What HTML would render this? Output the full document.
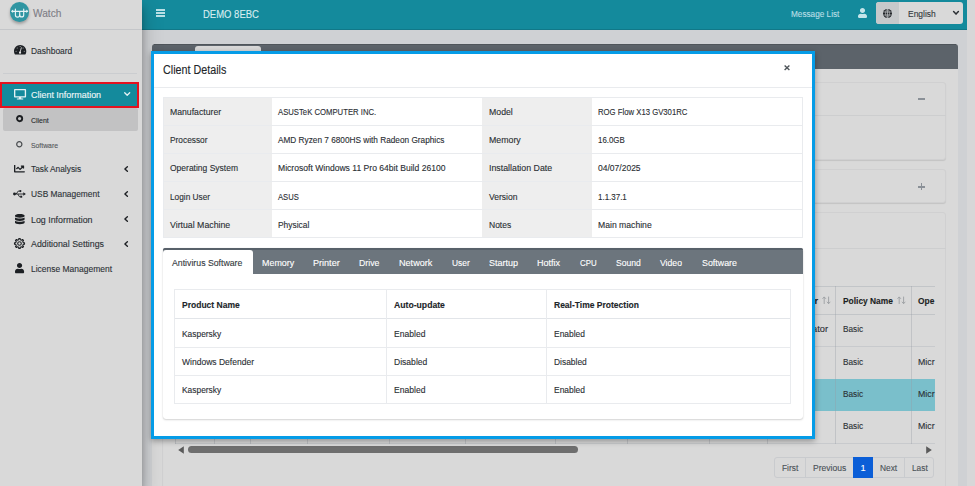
<!DOCTYPE html>
<html><head><meta charset="utf-8"><title>Watch</title>
<style>
html,body{margin:0;padding:0;}
body{width:975px;height:486px;overflow:hidden;position:relative;background:#cfd1d4;font-family:"Liberation Sans",sans-serif;}
.a{position:absolute;box-sizing:border-box;}
.t{position:absolute;white-space:nowrap;transform-origin:0 50%;font-family:"Liberation Sans",sans-serif;-webkit-text-stroke:0.12px;}
svg{position:absolute;overflow:visible;}
</style></head><body>

<!-- top navbar -->
<div class="a" style="left:142px;top:0;width:825px;height:29.5px;background:#148a9c;"></div>
<div class="a" style="left:142px;top:28.7px;width:825px;height:0.8px;background:#117888;"></div>
<!-- right scrollbar strip -->
<div class="a" style="left:967px;top:0;width:8px;height:486px;background:#d7d7d8;"></div>

<!-- main card -->
<div class="a" style="left:151.5px;top:43.5px;width:806.5px;height:460px;background:#d9d9d9;border-radius:3px 3px 0 0;"></div>
<div class="a" style="left:151.5px;top:43.5px;width:806.5px;height:25.5px;background:#5c636a;border-radius:3px 3px 0 0;"></div>
<div class="a" style="left:153.5px;top:43.5px;width:802.5px;height:1px;background:#4f555b;"></div>
<div class="a" style="left:194.8px;top:46.2px;width:66px;height:23px;background:#d9d9d9;border-radius:3px 3px 0 0;"></div>

<!-- inner card 1 -->
<div class="a" style="left:162.3px;top:82px;width:784px;height:78px;background:#d9d9d9;border:1px solid #d0d0d1;border-radius:3px;box-shadow:0 1px 1px rgba(0,0,0,.10);"></div>
<div class="a" style="left:162.3px;top:114.6px;width:784px;height:1px;background:#cdcecf;"></div>
<div class="a" style="left:917.8px;top:97.9px;width:7.6px;height:1.7px;background:#8a9097;"></div>
<!-- inner card 2 -->
<div class="a" style="left:162.3px;top:169.3px;width:784px;height:33.5px;background:#d9d9d9;border:1px solid #d0d0d1;border-radius:3px;box-shadow:0 1px 1px rgba(0,0,0,.10);"></div>
<div class="a" style="left:917.8px;top:185.9px;width:7.6px;height:1.7px;background:#8a9097;"></div>
<div class="a" style="left:920.8px;top:182.9px;width:1.7px;height:7.6px;background:#8a9097;"></div>
<!-- inner card 3 -->
<div class="a" style="left:162.3px;top:212px;width:784px;height:300px;background:#d9d9d9;border:1px solid #d0d0d1;border-radius:3px;"></div>
<div class="a" style="left:162.3px;top:247.6px;width:784px;height:1px;background:#cdcecf;"></div>

<!-- background table -->
<div class="a" style="left:174px;top:285.5px;width:760.8px;height:158.4px;overflow:hidden;">
  <div class="a" style="left:1px;top:0;width:761px;height:1px;background:#c2c5c8;"></div>
  <div class="a" style="left:1px;top:28.5px;width:761px;height:1.2px;background:#c2c5c8;"></div>
  <div class="a" style="left:1px;top:60.8px;width:761px;height:1px;background:#c8cacd;"></div>
  <div class="a" style="left:1px;top:93px;width:761px;height:1px;background:#c8cacd;"></div>
  <div class="a" style="left:1px;top:93.6px;width:761px;height:32.1px;background:#7abfcb;"></div>
  <div class="a" style="left:1px;top:157.4px;width:761px;height:1px;background:#c8cacd;"></div>
  <div class="a" style="left:0.5px;top:0;width:1px;height:158px;background:rgba(150,156,164,.36);"></div>
  <div class="a" style="left:39.8px;top:0;width:1px;height:158px;background:rgba(150,156,164,.36);"></div>
  <div class="a" style="left:75.5px;top:0;width:1px;height:158px;background:rgba(150,156,164,.36);"></div>
  <div class="a" style="left:132.8px;top:0;width:1px;height:158px;background:rgba(150,156,164,.36);"></div>
  <div class="a" style="left:214.8px;top:0;width:1px;height:158px;background:rgba(150,156,164,.36);"></div>
  <div class="a" style="left:290.5px;top:0;width:1px;height:158px;background:rgba(150,156,164,.36);"></div>
  <div class="a" style="left:380.5px;top:0;width:1px;height:158px;background:rgba(150,156,164,.36);"></div>
  <div class="a" style="left:452.8px;top:0;width:1px;height:158px;background:rgba(150,156,164,.36);"></div>
  <div class="a" style="left:534.8px;top:0;width:1px;height:158px;background:rgba(150,156,164,.36);"></div>
  <div class="a" style="left:593.2px;top:0;width:1px;height:158px;background:rgba(150,156,164,.36);"></div>
  <div class="a" style="left:661.0px;top:0;width:1px;height:158px;background:rgba(150,156,164,.36);"></div>
  <div class="a" style="left:736.9px;top:0;width:1px;height:158px;background:rgba(150,156,164,.36);"></div>
</div>
<!-- h scrollbar -->
<div class="a" style="left:188.3px;top:445.8px;width:390px;height:7.4px;background:#6e6e6e;border-radius:4px;"></div>
<svg style="left:177.8px;top:445.6px" width="6" height="8" viewBox="0 0 6 8"><path d="M5.8 0.2 L0.2 4 L5.8 7.8Z" fill="#5a5a5a"/></svg>
<svg style="left:926.2px;top:445.6px" width="6" height="8" viewBox="0 0 6 8"><path d="M0.2 0.2 L5.8 4 L0.2 7.8Z" fill="#5a5a5a"/></svg>

<!-- pagination -->
<div class="a" style="left:774.2px;top:456.8px;width:160.3px;height:21.6px;background:#d9d9d9;border:1px solid #c9cbce;border-radius:3px;"></div>
<div class="a" style="left:805.1px;top:456.8px;width:1px;height:21.6px;background:#c9cbce;"></div>
<div class="a" style="left:853.2px;top:456.8px;width:19.4px;height:21.6px;background:#0b5ed7;"></div>
<div class="a" style="left:903.9px;top:456.8px;width:1px;height:21.6px;background:#c9cbce;"></div>

<!-- sidebar -->
<div class="a" style="left:0;top:0;width:142.2px;height:486px;background:#d9d9d9;box-shadow:0 9px 19px rgba(0,0,0,.25),0 7px 7px rgba(0,0,0,.22);"></div>
<div class="a" style="left:0;top:28.9px;width:142.2px;height:1px;background:#c4c6c9;"></div>
<div class="a" style="left:2.7px;top:73px;width:134.5px;height:1px;background:#cbcdd0;"></div>
<!-- logo -->
<div class="a" style="left:9.6px;top:2.1px;width:19.8px;height:19.8px;border-radius:50%;background:#2f95a2;box-shadow:0 2px 3px rgba(0,0,0,.28);"></div>
<svg style="left:0;top:0" width="40" height="26" viewBox="0 0 40 26"><g fill="none" stroke="#e6f3f5" stroke-width="1.15" stroke-linecap="round"><path d="M12.2 11.3 H27.2"/><path d="M15.4 9.1 V14.9 a2.15 2.15 0 0 0 4.3 0 V11.5"/><path d="M19.7 14.9 a2 2 0 0 0 4 0 V9.1"/></g><path d="M13.1 9.5 L11 11.3 L13.1 13.1Z M26.3 9.5 L28.4 11.3 L26.3 13.1Z" fill="#e6f3f5"/></svg>
<!-- active item -->
<div class="a" style="left:0;top:82.1px;width:139.3px;height:25.8px;background:#148a9c;border:2.5px solid #e5121f;"></div>
<div class="a" style="left:2.9px;top:108.3px;width:134.9px;height:22.3px;background:#c2c2c3;border-radius:2px;"></div>

<!-- sidebar icons -->
<svg style="left:13.8px;top:45.2px" width="12.3" height="9.6" viewBox="0 32 576 448" preserveAspectRatio="none"><path fill="#1d2024" d="M288 32C128.940 32 0 160.940 0 320c0 52.800 14.250 102.260 39.060 144.800 5.610 9.620 16.300 15.200 27.440 15.200h443c11.140 0 21.830-5.580 27.440-15.200C561.750 422.260 576 372.800 576 320c0-159.060-128.940-288-288-288z"/><circle cx="288" cy="104" r="24" fill="#b9bbbd"/><circle cx="150" cy="176" r="24" fill="#b9bbbd"/><circle cx="96" cy="320" r="24" fill="#b9bbbd"/><circle cx="480" cy="320" r="24" fill="#b9bbbd"/><circle cx="426" cy="176" r="24" fill="#b9bbbd"/><path d="M282 380 L344 160" stroke="#e3e3e3" stroke-width="40" stroke-linecap="round"/><circle cx="282" cy="392" r="52" fill="#e3e3e3"/></svg>
<svg style="left:14.1px;top:88.8px" width="12.1" height="10.4" viewBox="0 0 576 512" preserveAspectRatio="none"><path fill="#e4f2f4" d="M528 0H48C21.500 0 0 21.500 0 48v320c0 26.500 21.500 48 48 48h192l-16 48h-72c-13.300 0-24 10.700-24 24s10.700 24 24 24h272c13.300 0 24-10.700 24-24s-10.700-24-24-24h-72l-16-48h192c26.500 0 48-21.500 48-48V48c0-26.500-21.500-48-48-48zm-16 352H64V64h448v288z"/></svg>
<svg style="left:123.7px;top:91.8px" width="6.4" height="4.2" viewBox="0 0 6.4 4.2"><path d="M0.7 0.7 L3.2 3.3 L5.7 0.7" stroke="#e4f2f4" stroke-width="1.3" fill="none" stroke-linecap="round" stroke-linejoin="round"/></svg>
<svg style="left:16.1px;top:115.3px" width="7.2" height="7.2" viewBox="0 0 7.2 7.2"><circle cx="3.6" cy="3.6" r="2.6" fill="none" stroke="#1d1f22" stroke-width="1.9"/></svg>
<svg style="left:16.4px;top:140.6px" width="6.6" height="6.6" viewBox="0 0 6.6 6.6"><circle cx="3.3" cy="3.3" r="2.6" fill="none" stroke="#4a4d50" stroke-width="1.2"/></svg>
<svg style="left:14.4px;top:164.6px" width="10.8" height="7.4" viewBox="0 64 512 384" preserveAspectRatio="none"><path fill="#1d2024" d="M496 384H64V80c0-8.840-7.160-16-16-16H16C7.160 64 0 71.160 0 80v336c0 17.670 14.330 32 32 32h464c8.840 0 16-7.160 16-16v-32c0-8.840-7.160-16-16-16zM464 96H345.940c-21.380 0-32.090 25.850-16.970 40.970l32.400 32.400L288 242.750l-73.370-73.370c-12.500-12.500-32.760-12.500-45.250 0l-68.690 68.690c-6.250 6.250-6.250 16.380 0 22.630l22.620 22.620c6.250 6.250 16.380 6.250 22.630 0L192 237.250l73.370 73.370c12.500 12.500 32.760 12.500 45.250 0l96-96 32.400 32.400c15.120 15.120 40.970 4.410 40.970-16.970V112c.01-8.840-7.150-16-15.990-16z"/></svg>
<svg style="left:13.3px;top:189.6px" width="13" height="8" viewBox="0 0 13 8"><g fill="#1d2024" stroke="none"><circle cx="1.5" cy="4" r="1.45"/><path d="M10.3 2.2 L12.9 4 L10.3 5.8Z"/><circle cx="7.4" cy="1.1" r="1.05"/><rect x="7.2" y="5.7" width="2" height="2"/></g><g fill="none" stroke="#1d2024" stroke-width="0.9"><path d="M1.5 4 H11"/><path d="M3.2 4 L5.2 1.1 H7.2"/><path d="M4.8 4 L6.4 6.7 H7.4"/></g></svg>
<svg style="left:15.1px;top:213.6px" width="9.6" height="10.2" viewBox="0 0 448 512" preserveAspectRatio="none"><path fill="#1d2024" d="M448 73.143v45.714C448 159.143 347.667 192 224 192S0 159.143 0 118.857V73.143C0 32.857 100.333 0 224 0s224 32.857 224 73.143zM448 176v102.857C448 319.143 347.667 352 224 352S0 319.143 0 278.857V176c48.125 33.143 136.208 48.572 224 48.572S399.874 209.143 448 176zm0 160v102.857C448 479.143 347.667 512 224 512S0 479.143 0 438.857V336c48.125 33.143 136.208 48.572 224 48.572S399.874 369.143 448 336z"/></svg>
<svg style="left:14.35px;top:237.9px" width="11" height="11" viewBox="0.2 0.2 11.6 11.6"><path d="M10.01 5.17 L11.25 5.27 L11.25 6.73 L10.01 6.83 L9.43 8.25 L10.23 9.19 L9.19 10.23 L8.25 9.43 L6.83 10.01 L6.73 11.25 L5.27 11.25 L5.17 10.01 L3.75 9.43 L2.81 10.23 L1.77 9.19 L2.57 8.25 L1.99 6.83 L0.75 6.73 L0.75 5.27 L1.99 5.17 L2.57 3.75 L1.77 2.81 L2.81 1.77 L3.75 2.57 L5.17 1.99 L5.27 0.75 L6.73 0.75 L6.83 1.99 L8.25 2.57 L9.19 1.77 L10.23 2.81 L9.43 3.75Z" fill="none" stroke="#1d2024" stroke-width="1.2" stroke-linejoin="round"/><circle cx="6" cy="6" r="1.9" fill="none" stroke="#1d2024" stroke-width="1.15"/></svg>
<svg style="left:15.3px;top:263.2px" width="9.1" height="10.2" viewBox="0 0 448 512" preserveAspectRatio="none"><path fill="#1d2024" d="M224 256c70.700 0 128-57.300 128-128S294.700 0 224 0 96 57.300 96 128s57.300 128 128 128zm89.600 32h-16.700c-22.200 10.200-46.900 16-72.900 16s-50.600-5.800-72.900-16h-16.700C60.200 288 0 348.200 0 422.400V464c0 26.500 21.500 48 48 48h352c26.500 0 48-21.500 48-48v-41.600c0-74.200-60.200-134.400-134.400-134.400z"/></svg>
<!-- chevrons left -->
<svg style="left:124.2px;top:165.9px" width="4.2" height="6" viewBox="0 0 4.2 6"><path d="M3.4 0.7 L0.9 3 L3.4 5.3" stroke="#1d2024" stroke-width="1.4" fill="none" stroke-linejoin="round" stroke-linecap="round"/></svg>
<svg style="left:124.2px;top:190.9px" width="4.2" height="6" viewBox="0 0 4.2 6"><path d="M3.4 0.7 L0.9 3 L3.4 5.3" stroke="#1d2024" stroke-width="1.4" fill="none" stroke-linejoin="round" stroke-linecap="round"/></svg>
<svg style="left:124.2px;top:215.6px" width="4.2" height="6" viewBox="0 0 4.2 6"><path d="M3.4 0.7 L0.9 3 L3.4 5.3" stroke="#1d2024" stroke-width="1.4" fill="none" stroke-linejoin="round" stroke-linecap="round"/></svg>
<svg style="left:124.2px;top:240.8px" width="4.2" height="6" viewBox="0 0 4.2 6"><path d="M3.4 0.7 L0.9 3 L3.4 5.3" stroke="#1d2024" stroke-width="1.4" fill="none" stroke-linejoin="round" stroke-linecap="round"/></svg>
<!-- navbar icons -->
<div class="a" style="left:156px;top:9.3px;width:8.9px;height:1.3px;background:#b9dfe5;"></div>
<div class="a" style="left:156px;top:12.3px;width:8.9px;height:1.3px;background:#b9dfe5;"></div>
<div class="a" style="left:156px;top:15.3px;width:8.9px;height:1.3px;background:#b9dfe5;"></div>
<svg style="left:858px;top:8px" width="9" height="10" viewBox="0 0 448 512" preserveAspectRatio="none"><path fill="#c4e5ea" d="M224 256c70.700 0 128-57.300 128-128S294.700 0 224 0 96 57.300 96 128s57.300 128 128 128zm89.600 32h-16.700c-22.200 10.200-46.900 16-72.900 16s-50.600-5.800-72.900-16h-16.700C60.200 288 0 348.200 0 422.400V464c0 26.500 21.500 48 48 48h352c26.500 0 48-21.500 48-48v-41.600c0-74.200-60.200-134.400-134.400-134.400z"/></svg>
<!-- sort arrows -->
<svg style="left:896.5px;top:296.3px" width="9" height="8.6" viewBox="0 0 9 8.6"><path d="M2.2 8 V1 M0.5 2.8 L2.2 0.9 L3.9 2.8 M6.6 0.6 V7.6 M4.9 5.8 L6.6 7.7 L8.3 5.8" stroke="#9b9ea2" stroke-width="0.9" fill="none"/></svg>
<svg style="left:821.5px;top:296.3px" width="9" height="8.6" viewBox="0 0 9 8.6"><path d="M2.2 8 V1 M0.5 2.8 L2.2 0.9 L3.9 2.8 M6.6 0.6 V7.6 M4.9 5.8 L6.6 7.7 L8.3 5.8" stroke="#9b9ea2" stroke-width="0.9" fill="none"/></svg>

<span class="t" style="left:33.40px;top:6px;font-size:10.6px;line-height:14px;color:#7d7d86;transform:scaleX(0.9581);">Watch</span>
<span class="t" style="left:30.80px;top:45px;font-size:9.1px;line-height:12px;color:#2c3136;transform:scaleX(0.9281);">Dashboard</span>
<span class="t" style="left:30.70px;top:89px;font-size:9.2px;line-height:12px;color:#eef7f8;transform:scaleX(0.9734);">Client Information</span>
<span class="t" style="left:30.70px;top:115px;font-size:7.6px;line-height:11px;color:#2a2c30;transform:scaleX(0.9165);">Client</span>
<span class="t" style="left:30.70px;top:140px;font-size:7.6px;line-height:11px;color:#55585c;transform:scaleX(0.9009);">Software</span>
<span class="t" style="left:30.70px;top:163px;font-size:9.2px;line-height:12px;color:#2c3136;transform:scaleX(0.9083);">Task Analysis</span>
<span class="t" style="left:30.70px;top:188px;font-size:9.2px;line-height:12px;color:#2c3136;transform:scaleX(0.9124);">USB Management</span>
<span class="t" style="left:30.70px;top:214px;font-size:9.2px;line-height:12px;color:#2c3136;transform:scaleX(0.9633);">Log Information</span>
<span class="t" style="left:30.70px;top:238px;font-size:9.2px;line-height:12px;color:#2c3136;transform:scaleX(0.9591);">Additional Settings</span>
<span class="t" style="left:30.70px;top:263px;font-size:9.2px;line-height:12px;color:#2c3136;transform:scaleX(0.9219);">License Management</span>
<span class="t" style="left:203.00px;top:7px;font-size:10.7px;line-height:14px;color:#d9edf0;transform:scaleX(0.8880);">DEMO 8EBC</span>
<span class="t" style="left:791.20px;top:8px;font-size:9.2px;line-height:12px;color:#b9dfe5;transform:scaleX(0.8940);">Message List</span>
<span class="t" style="left:842.80px;top:295px;font-size:9.2px;line-height:12px;color:#1c1f23;font-weight:700;transform:scaleX(0.9132);">Policy Name</span>
<span class="t" style="left:917.70px;top:295px;font-size:9.2px;line-height:12px;color:#1c1f23;font-weight:700;transform:scaleX(0.9119);">Ope</span>
<span class="t" style="left:812.20px;top:323px;font-size:9.2px;line-height:12px;color:#2c3035;transform:scaleX(1.0099);">ator</span>
<span class="t" style="left:814.60px;top:295px;font-size:9.2px;line-height:12px;color:#1c1f23;font-weight:700;">r</span>
<span class="t" style="left:842.80px;top:323px;font-size:9.2px;line-height:12px;color:#2c3035;transform:scaleX(0.8946);">Basic</span>
<span class="t" style="left:842.80px;top:356px;font-size:9.2px;line-height:12px;color:#2c3035;transform:scaleX(0.8946);">Basic</span>
<span class="t" style="left:842.80px;top:388px;font-size:9.2px;line-height:12px;color:#2c3035;transform:scaleX(0.8946);">Basic</span>
<span class="t" style="left:842.80px;top:420px;font-size:9.2px;line-height:12px;color:#2c3035;transform:scaleX(0.8946);">Basic</span>
<span class="t" style="left:917.70px;top:356px;font-size:9.2px;line-height:12px;color:#2c3035;transform:scaleX(0.9563);">Micr</span>
<span class="t" style="left:917.70px;top:388px;font-size:9.2px;line-height:12px;color:#2c3035;transform:scaleX(0.9563);">Micr</span>
<span class="t" style="left:917.70px;top:420px;font-size:9.2px;line-height:12px;color:#2c3035;transform:scaleX(0.9563);">Micr</span>
<span class="t" style="left:781.80px;top:462px;font-size:9.2px;line-height:12px;color:#4a5157;transform:scaleX(0.9071);">First</span>
<span class="t" style="left:812.80px;top:462px;font-size:9.2px;line-height:12px;color:#4a5157;transform:scaleX(0.9287);">Previous</span>
<span class="t" style="left:860.54px;top:462px;font-size:9.2px;line-height:12px;color:#ffffff;">1</span>
<span class="t" style="left:879.60px;top:462px;font-size:9.2px;line-height:12px;color:#4a5157;transform:scaleX(0.9098);">Next</span>
<span class="t" style="left:911.60px;top:462px;font-size:9.2px;line-height:12px;color:#4a5157;transform:scaleX(0.9036);">Last</span>

<!-- navbar controls -->
<div class="a" style="left:876px;top:2.4px;width:86.8px;height:21.2px;background:#d9d9d9;border-radius:3px;"></div>
<div class="a" style="left:876px;top:2.4px;width:23.4px;height:21.2px;background:#c6c9cb;border-radius:3px 0 0 3px;"></div>

<svg style="left:883.1px;top:8.9px" width="9" height="9" viewBox="0 0 9 9"><circle cx="4.5" cy="4.5" r="4.5" fill="#1f2327"/><g fill="none" stroke="#c6c9cb" stroke-width="0.7"><ellipse cx="4.5" cy="4.5" rx="1.9" ry="4.2"/><path d="M0.3 3 H8.7 M0.3 6 H8.7 M4.5 0.2 V8.8"/></g></svg>
<svg style="left:953px;top:11.4px" width="6" height="4" viewBox="0 0 6 4"><path d="M0.6 0.6 L3 3.1 L5.4 0.6" stroke="#2a2e33" stroke-width="1.5" fill="none" stroke-linecap="round" stroke-linejoin="round"/></svg>

<!-- modal -->
<div class="a" style="left:151px;top:50.5px;width:664px;height:388.8px;background:#fff;border:3px solid #059ce7;box-shadow:0 2px 6px rgba(0,0,0,.35);"></div>
<div class="a" style="left:154px;top:86.7px;width:658px;height:1px;background:#e9ebee;"></div>

<!-- details table -->
<div class="a" style="left:163.2px;top:97px;width:108.8px;height:140.6px;background:#eeeeee;"></div>
<div class="a" style="left:482.3px;top:97px;width:109.3px;height:140.6px;background:#eeeeee;"></div>
<div class="a" style="left:162.7px;top:96.7px;width:640.2px;height:1px;background:#e9ebee;"></div>
<div class="a" style="left:162.7px;top:124.9px;width:640.2px;height:1px;background:#e9ebee;"></div>
<div class="a" style="left:162.7px;top:152.9px;width:640.2px;height:1px;background:#e9ebee;"></div>
<div class="a" style="left:162.7px;top:181.0px;width:640.2px;height:1px;background:#e9ebee;"></div>
<div class="a" style="left:162.7px;top:209.1px;width:640.2px;height:1px;background:#e9ebee;"></div>
<div class="a" style="left:162.7px;top:237.3px;width:640.2px;height:1px;background:#e9ebee;"></div>
<div class="a" style="left:162.7px;top:96.7px;width:1px;height:141.6px;background:#e9ebee;"></div>
<div class="a" style="left:801.9px;top:96.7px;width:1px;height:141.6px;background:#e9ebee;"></div>

<!-- tab card -->
<div class="a" style="left:163px;top:247.8px;width:639.5px;height:171.2px;background:#fff;border-radius:3px;box-shadow:0 0 1px rgba(0,0,0,.14),0 1px 2px rgba(0,0,0,.17);"></div>
<div class="a" style="left:163px;top:247.8px;width:639.5px;height:26px;background:#6c757d;border-radius:3px 3px 0 0;"></div>
<div class="a" style="left:163px;top:247.8px;width:639.5px;height:2.4px;background:#58616a;border-radius:3px 3px 0 0;"></div>
<div class="a" style="left:163px;top:250.2px;width:89.9px;height:23.8px;background:#fff;border-radius:3px 3px 0 0;"></div>

<!-- AV table -->
<div class="a" style="left:174.1px;top:288.9px;width:616.6px;height:1px;background:#e9ebee;"></div>
<div class="a" style="left:174.1px;top:317.5px;width:616.6px;height:1.6px;background:#e2e5e9;"></div>
<div class="a" style="left:174.1px;top:346.8px;width:616.6px;height:1px;background:#e9ebee;"></div>
<div class="a" style="left:174.1px;top:374.7px;width:616.6px;height:1px;background:#e9ebee;"></div>
<div class="a" style="left:174.1px;top:402.9px;width:616.6px;height:1px;background:#e9ebee;"></div>
<div class="a" style="left:174.1px;top:288.9px;width:1px;height:115px;background:#e9ebee;"></div>
<div class="a" style="left:386.3px;top:288.9px;width:1px;height:115px;background:#e9ebee;"></div>
<div class="a" style="left:546.3px;top:288.9px;width:1px;height:115px;background:#e9ebee;"></div>
<div class="a" style="left:789.7px;top:288.9px;width:1px;height:115px;background:#e9ebee;"></div>

<svg style="left:784.1px;top:65.3px" width="6" height="5.6" viewBox="0 0 6 5.6"><path d="M0.6 0.5 L5.4 5.1 M5.4 0.5 L0.6 5.1" stroke="#4d5358" stroke-width="1.35" fill="none"/></svg>

<span class="t" style="left:908.20px;top:8px;font-size:9.2px;line-height:12px;color:#33383d;transform:scaleX(0.9223);">English</span>
<span class="t" style="left:162.60px;top:62px;font-size:12.3px;line-height:16px;color:#212529;transform:scaleX(0.8737);">Client Details</span>
<span class="t" style="left:170.10px;top:106px;font-size:9.1px;line-height:12px;color:#2a2e33;transform:scaleX(0.9537);">Manufacturer</span>
<span class="t" style="left:278.30px;top:106px;font-size:9.1px;line-height:12px;color:#2a2e33;transform:scaleX(0.8486);">ASUSTeK COMPUTER INC.</span>
<span class="t" style="left:489.30px;top:106px;font-size:9.1px;line-height:12px;color:#2a2e33;transform:scaleX(0.9604);">Model</span>
<span class="t" style="left:598.40px;top:106px;font-size:9.1px;line-height:12px;color:#2a2e33;transform:scaleX(0.8504);">ROG Flow X13 GV301RC</span>
<span class="t" style="left:170.10px;top:134px;font-size:9.1px;line-height:12px;color:#2a2e33;transform:scaleX(0.9160);">Processor</span>
<span class="t" style="left:278.30px;top:134px;font-size:9.1px;line-height:12px;color:#2a2e33;transform:scaleX(0.9069);">AMD Ryzen 7 6800HS with Radeon Graphics</span>
<span class="t" style="left:489.30px;top:134px;font-size:9.1px;line-height:12px;color:#2a2e33;transform:scaleX(0.9652);">Memory</span>
<span class="t" style="left:598.40px;top:134px;font-size:9.1px;line-height:12px;color:#2a2e33;transform:scaleX(0.8657);">16.0GB</span>
<span class="t" style="left:170.10px;top:162px;font-size:9.1px;line-height:12px;color:#2a2e33;transform:scaleX(0.9343);">Operating System</span>
<span class="t" style="left:278.30px;top:162px;font-size:9.1px;line-height:12px;color:#2a2e33;transform:scaleX(0.9423);">Microsoft Windows 11 Pro 64bit Build 26100</span>
<span class="t" style="left:489.30px;top:162px;font-size:9.1px;line-height:12px;color:#2a2e33;transform:scaleX(0.9690);">Installation Date</span>
<span class="t" style="left:598.40px;top:162px;font-size:9.1px;line-height:12px;color:#2a2e33;transform:scaleX(0.9359);">04/07/2025</span>
<span class="t" style="left:170.10px;top:191px;font-size:9.1px;line-height:12px;color:#2a2e33;transform:scaleX(0.9094);">Login User</span>
<span class="t" style="left:278.30px;top:191px;font-size:9.1px;line-height:12px;color:#2a2e33;transform:scaleX(0.8399);">ASUS</span>
<span class="t" style="left:489.30px;top:191px;font-size:9.1px;line-height:12px;color:#2a2e33;transform:scaleX(0.9392);">Version</span>
<span class="t" style="left:598.40px;top:191px;font-size:9.1px;line-height:12px;color:#2a2e33;transform:scaleX(0.8760);">1.1.37.1</span>
<span class="t" style="left:170.10px;top:219px;font-size:9.1px;line-height:12px;color:#2a2e33;transform:scaleX(0.9630);">Virtual Machine</span>
<span class="t" style="left:278.30px;top:219px;font-size:9.1px;line-height:12px;color:#2a2e33;transform:scaleX(0.9240);">Physical</span>
<span class="t" style="left:489.30px;top:219px;font-size:9.1px;line-height:12px;color:#2a2e33;transform:scaleX(0.9341);">Notes</span>
<span class="t" style="left:598.40px;top:219px;font-size:9.1px;line-height:12px;color:#2a2e33;transform:scaleX(0.9483);">Main machine</span>
<span class="t" style="left:171.80px;top:257px;font-size:9.2px;line-height:12px;color:#343a40;transform:scaleX(0.9507);">Antivirus Software</span>
<span class="t" style="left:261.80px;top:257px;font-size:9.2px;line-height:12px;color:#fff;transform:scaleX(0.9702);">Memory</span>
<span class="t" style="left:313.30px;top:257px;font-size:9.2px;line-height:12px;color:#fff;transform:scaleX(0.9866);">Printer</span>
<span class="t" style="left:359.20px;top:257px;font-size:9.2px;line-height:12px;color:#fff;transform:scaleX(0.9509);">Drive</span>
<span class="t" style="left:398.90px;top:257px;font-size:9.2px;line-height:12px;color:#fff;transform:scaleX(0.9880);">Network</span>
<span class="t" style="left:451.50px;top:257px;font-size:9.2px;line-height:12px;color:#fff;transform:scaleX(0.9121);">User</span>
<span class="t" style="left:488.60px;top:257px;font-size:9.2px;line-height:12px;color:#fff;transform:scaleX(0.9789);">Startup</span>
<span class="t" style="left:537.30px;top:257px;font-size:9.2px;line-height:12px;color:#fff;transform:scaleX(0.9830);">Hotfix</span>
<span class="t" style="left:579.60px;top:257px;font-size:9.2px;line-height:12px;color:#fff;transform:scaleX(0.8554);">CPU</span>
<span class="t" style="left:615.90px;top:257px;font-size:9.2px;line-height:12px;color:#fff;transform:scaleX(0.9369);">Sound</span>
<span class="t" style="left:660.20px;top:257px;font-size:9.2px;line-height:12px;color:#fff;transform:scaleX(0.9424);">Video</span>
<span class="t" style="left:701.60px;top:257px;font-size:9.2px;line-height:12px;color:#fff;transform:scaleX(0.9651);">Software</span>
<span class="t" style="left:181.60px;top:299px;font-size:9.2px;line-height:12px;color:#212529;font-weight:700;transform:scaleX(0.9262);">Product Name</span>
<span class="t" style="left:393.70px;top:299px;font-size:9.2px;line-height:12px;color:#212529;font-weight:700;transform:scaleX(0.9410);">Auto-update</span>
<span class="t" style="left:553.60px;top:299px;font-size:9.2px;line-height:12px;color:#212529;font-weight:700;transform:scaleX(0.9255);">Real-Time Protection</span>
<span class="t" style="left:181.60px;top:328px;font-size:9.1px;line-height:12px;color:#2a2e33;transform:scaleX(0.9230);">Kaspersky</span>
<span class="t" style="left:393.90px;top:328px;font-size:9.1px;line-height:12px;color:#2a2e33;transform:scaleX(0.9408);">Enabled</span>
<span class="t" style="left:553.70px;top:328px;font-size:9.1px;line-height:12px;color:#2a2e33;transform:scaleX(0.9288);">Enabled</span>
<span class="t" style="left:181.60px;top:356px;font-size:9.1px;line-height:12px;color:#2a2e33;transform:scaleX(0.9372);">Windows Defender</span>
<span class="t" style="left:393.90px;top:356px;font-size:9.1px;line-height:12px;color:#2a2e33;transform:scaleX(0.9409);">Disabled</span>
<span class="t" style="left:553.70px;top:356px;font-size:9.1px;line-height:12px;color:#2a2e33;transform:scaleX(0.9268);">Disabled</span>
<span class="t" style="left:181.60px;top:384px;font-size:9.1px;line-height:12px;color:#2a2e33;transform:scaleX(0.9230);">Kaspersky</span>
<span class="t" style="left:393.90px;top:384px;font-size:9.1px;line-height:12px;color:#2a2e33;transform:scaleX(0.9408);">Enabled</span>
<span class="t" style="left:553.70px;top:384px;font-size:9.1px;line-height:12px;color:#2a2e33;transform:scaleX(0.9288);">Enabled</span>

</body></html>
